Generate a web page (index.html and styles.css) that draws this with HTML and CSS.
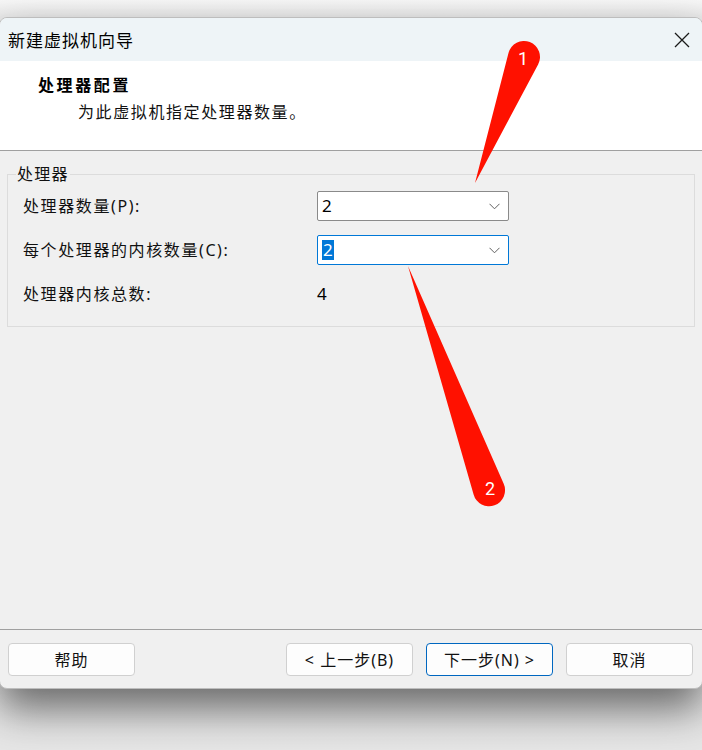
FILE: index.html
```html
<!DOCTYPE html>
<html lang="zh-CN">
<head>
<meta charset="utf-8">
<title>新建虚拟机向导</title>
<link rel="stylesheet" href="styles.css">
</head>
<body>
<div class="screen">
  <div class="window">
    <div class="titlebar">
      <span class="title">新建虚拟机向导</span>
      <svg class="close" width="16" height="16" viewBox="0 0 16 16"><path d="M1 1 L15 15 M15 1 L1 15" stroke="#1a1a1a" stroke-width="1.3" fill="none"/></svg>
    </div>
    <div class="header">
      <div class="h-title">处理器配置</div>
      <div class="h-sub">为此虚拟机指定处理器数量。</div>
    </div>
    <div class="content">
      <fieldset class="group">
        <legend class="legend">处理器</legend>
        <div class="rows">
          <div class="label">处理器数量(P):</div>
          <div class="combo">
            <span class="value">2</span>
            <svg class="chev" width="11" height="7" viewBox="0 0 11 7"><polyline points="0.5,0.8 5.5,5.8 10.5,0.8" fill="none" stroke="#606060" stroke-width="1"/></svg>
          </div>
          <div class="label">每个处理器的内核数量(C):</div>
          <div class="combo focused">
            <span class="value"><span class="sel">2</span></span>
            <svg class="chev" width="11" height="7" viewBox="0 0 11 7"><polyline points="0.5,0.8 5.5,5.8 10.5,0.8" fill="none" stroke="#606060" stroke-width="1"/></svg>
          </div>
          <div class="label">处理器内核总数:</div>
          <div class="total">4</div>
        </div>
      </fieldset>
    </div>
    <div class="footer">
      <button class="btn">帮助</button>
      <div class="nav">
        <button class="btn">&lt; 上一步(B)</button>
        <button class="btn primary">下一步(N) &gt;</button>
        <button class="btn">取消</button>
      </div>
    </div>
  </div>
  <svg class="annot" width="702" height="750" viewBox="0 0 702 750">
    <path d="M475 183 L508.5 53 A16 16 0 1 1 538.1 64.5 Z" fill="#ff1100"/>
    <path d="M408 266 L503.6 483.6 A16 16 0 1 1 473.6 494.4 Z" fill="#ff1100"/>
    <text x="523" y="65" class="num">1</text>
    <text x="490" y="495" class="num">2</text>
  </svg>
</div>
</body>
</html>
```
FILE: styles.css
```css
* { box-sizing: border-box; }
html, body { margin: 0; padding: 0; }
body {
  font-family: "Segoe UI", "Noto Sans", "Noto Sans CJK SC", sans-serif;
  color: #000;
}
.screen {
  position: relative;
  width: 702px;
  height: 750px;
  overflow: hidden;
  background: linear-gradient(to bottom, #f7f7f7 0, #ececec 16px, #e6e6e6 100%);
  padding-top: 17px;
}
.window {
  margin-left: -1px;
  width: 704px;
  height: 672px;
  border: 1px solid #bdbdbd;
  border-radius: 8px;
  background: #f0f0f0;
  display: flex;
  flex-direction: column;
  overflow: hidden;
  box-shadow: 0 20px 42px rgba(0, 0, 0, 0.55);
}
.titlebar {
  height: 43px;
  flex: none;
  background: #eef4f7;
  display: flex;
  align-items: center;
  justify-content: space-between;
  padding: 0 12px 0 8px;
}
.title {
  font-family: "Noto Sans CJK SC", sans-serif;
  font-size: 17px;
  letter-spacing: 1px;
  color: #000;
  line-height: 20px;
}
.close { display: block; }
.header {
  height: 90px;
  flex: none;
  background: #fff;
  border-bottom: 1px solid #a0a0a0;
  padding-top: 13px;
}
.h-title {
  font-family: "Noto Sans CJK SC", sans-serif;
  font-weight: 700;
  font-size: 16px;
  letter-spacing: 2.6px;
  line-height: 20px;
  padding-left: 38px;
}
.h-sub {
  font-family: "Noto Sans CJK SC", sans-serif;
  font-size: 16px;
  letter-spacing: 1.6px;
  line-height: 20px;
  margin-top: 7px;
  padding-left: 78px;
  color: #111;
}
.content {
  flex: 1;
  padding: 13px 7px 0 7px;
}
.group {
  margin: 0;
  padding: 0;
  min-width: 0;
  border: 1px solid #dcdcdc;
}
.legend {
  margin-left: 8px;
  padding: 0 1px;
  font-size: 16px;
  letter-spacing: 1.3px;
  line-height: 20px;
  color: #111;
}
.rows {
  display: grid;
  grid-template-columns: 294px 192px;
  grid-auto-rows: 30px;
  row-gap: 14px;
  padding: 7px 15px 17px 15px;
  align-items: center;
}
.label {
  font-size: 16px;
  letter-spacing: 1.6px;
  line-height: 20px;
  color: #111;
}
.combo {
  height: 30px;
  background: #fff;
  border: 1px solid #8a8a8a;
  border-radius: 2px;
  display: flex;
  align-items: center;
  justify-content: space-between;
  padding: 0 8px 0 4px;
}
.combo.focused { border-color: #0078d7; }
.value {
  font-size: 17px;
  line-height: 20px;
  display: flex;
}
.sel {
  background: #0078d7;
  color: #fff;
  padding: 0 1px;
}
.chev { display: block; margin-top: 1px; }
.total {
  font-size: 17px;
  line-height: 20px;
}
.footer {
  height: 59px;
  flex: none;
  border-top: 1px solid #a0a0a0;
  display: flex;
  align-items: flex-start;
  padding: 13px 9px 0 8px;
}
.nav {
  margin-left: auto;
  display: flex;
  gap: 13px;
}
.btn {
  width: 127px;
  height: 33px;
  background: #fdfdfd;
  border: 1px solid #d0d0d0;
  border-radius: 4px;
  font-family: "Segoe UI", "Noto Sans", "Noto Sans CJK SC", sans-serif;
  font-size: 16px;
  letter-spacing: 1px;
  color: #111;
  padding: 0;
  line-height: 20px;
}
.btn.primary { border-color: #0067c0; }
.annot {
  position: absolute;
  left: 0;
  top: 0;
  pointer-events: none;
}
.num {
  fill: #fff;
  font-family: Roboto, "Noto Sans", sans-serif;
  font-size: 18px;
  text-anchor: middle;
}
```
